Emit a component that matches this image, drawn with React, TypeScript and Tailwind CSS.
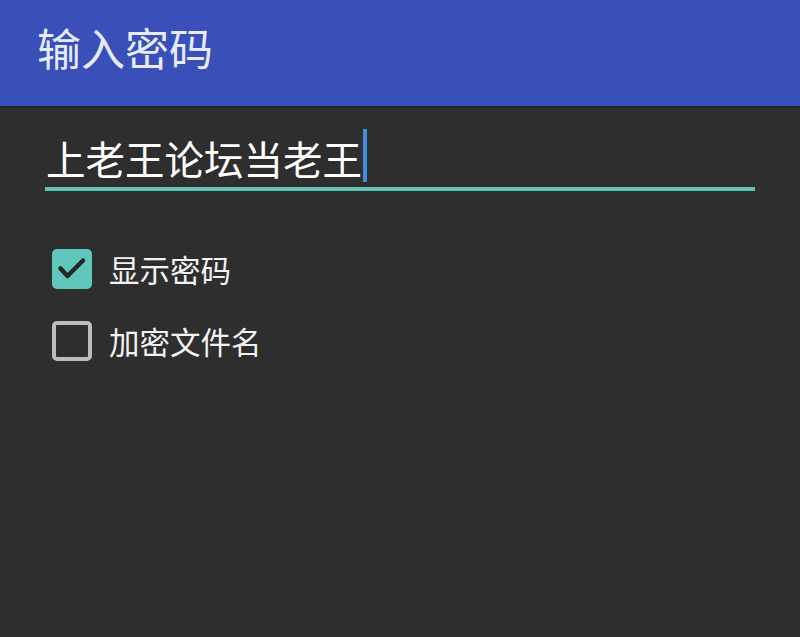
import React from "react";

const font = { fontFamily: '"Noto Sans CJK SC", "Noto Sans", sans-serif' };

export default function App() {
  return (
    <div className="w-[800px] h-[637px] bg-[#2f2e2f] flex flex-col overflow-hidden" style={font}>
      <div className="h-[106px] bg-[#3a50b9] shadow-[0_1px_2px_rgba(0,0,0,0.4)] flex items-center px-[37px] pb-[12px]">
        <span className="text-[44px] leading-none text-[#e8ebf8]">输入密码</span>
      </div>
      <div className="flex flex-col px-[45px] pt-[23px]">
        <div className="flex items-center h-[62px] border-b-[4px] border-[#5fc4b7]">
          <span className="text-[39.5px] leading-none text-white pl-[1px]">上老王论坛当老王</span>
          <span className="w-[4px] h-[53px] bg-[#3f8ee3] ml-[1px] self-start"></span>
        </div>
        <div className="flex flex-col gap-[32px] pt-[58px] pl-[7px]">
          <div className="flex items-center gap-[17px]">
            <div className="w-[40px] h-[40px] rounded-[5px] bg-[#5fc7bc] flex items-center justify-center">
              <svg width="40" height="40" viewBox="0 0 40 40" fill="none" stroke="#262626" strokeWidth="4.5" strokeLinecap="round" strokeLinejoin="round">
                <path d="M8.5 19.5L15.5 27L31 11.5" />
              </svg>
            </div>
            <span className="text-[30.5px] leading-none text-[#f2f2f2]">显示密码</span>
          </div>
          <div className="flex items-center gap-[17px]">
            <div className="w-[40px] h-[40px] rounded-[5px] border-[4px] border-[#bdbcbc]"></div>
            <span className="text-[30.5px] leading-none text-[#f2f2f2]">加密文件名</span>
          </div>
        </div>
      </div>
    </div>
  );
}
